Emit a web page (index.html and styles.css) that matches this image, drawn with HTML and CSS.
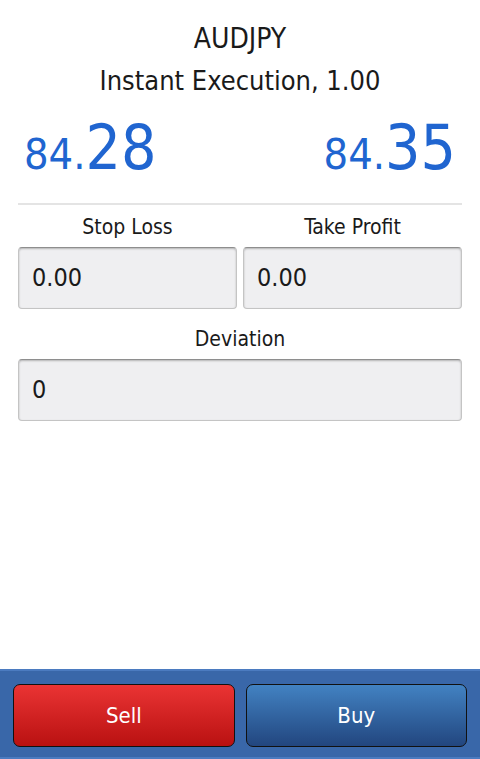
FILE: index.html
```html
<!DOCTYPE html>
<html lang="en">
<head>
    <meta charset="UTF-8">
    <title>AUDJPY - Order</title>
    <link rel="stylesheet" href="styles.css">
</head>
<body>
<div class="screen">
    <div class="ticket">
        <div class="symbol">AUDJPY</div>
        <div class="mode">Instant Execution, 1.00</div>
        <div class="prices">
            <div class="price"><span class="small">84.</span><span class="big">28</span></div>
            <div class="price"><span class="small">84.</span><span class="big">35</span></div>
        </div>
        <div class="divider"></div>
        <div class="fields">
            <div class="field">
                <div class="label">Stop Loss</div>
                <div class="box">0.00</div>
            </div>
            <div class="field">
                <div class="label">Take Profit</div>
                <div class="box">0.00</div>
            </div>
            <div class="field wide">
                <div class="label">Deviation</div>
                <div class="box">0</div>
            </div>
        </div>
    </div>
    <div class="footer">
        <button class="btn sell">Sell</button>
        <button class="btn buy">Buy</button>
    </div>
</div>
</body>
</html>
```

FILE: styles.css
```css
body {
    margin: 0;
    background: #fff;
    font-family: 'DejaVu Sans Condensed', 'DejaVu Sans', sans-serif;
    color: #1a1a1a;
}
.screen {
    height: 759px;
    display: flex;
    flex-direction: column;
}
.ticket {
    padding: 0 18px;
}
.symbol {
    text-align: center;
    font-size: 28px;
    line-height: 40px;
    padding-top: 19px;
}
.mode {
    text-align: center;
    font-size: 27px;
    line-height: 40px;
    margin-top: 2px;
}
.prices {
    display: flex;
    justify-content: space-between;
    padding: 0 6px;
    margin-top: 12px;
    color: #2065d0;
    line-height: 70px;
}
.price .small {
    font-size: 43px;
}
.price .big {
    font-size: 62px;
}
.divider {
    height: 2px;
    background: #e4e4e4;
    margin-top: 4px;
}
.fields {
    display: grid;
    grid-template-columns: 1fr 1fr;
    column-gap: 6px;
    row-gap: 14px;
    margin-top: 6px;
}
.field.wide {
    grid-column: 1 / 3;
}
.label {
    text-align: center;
    font-size: 21px;
    line-height: 32px;
    padding-bottom: 4px;
}
.box {
    height: 62px;
    box-sizing: border-box;
    background: #efeff1;
    border: 1px solid #c4c4c4;
    border-top-color: #8e8e8e;
    border-radius: 4px;
    box-shadow: inset 0 1px 2px rgba(0, 0, 0, 0.25);
    font-size: 25px;
    line-height: 60px;
    padding-left: 13px;
    color: #1a1a1a;
}
.footer {
    margin-top: auto;
    height: 90px;
    box-sizing: border-box;
    background: #3967a9;
    border-top: 2px solid #4b7bc0;
    border-bottom: 2px solid #4b7bc0;
    display: flex;
    gap: 11px;
    padding: 13px 13px 0;
}
.btn {
    flex: 1;
    height: 63px;
    border: 1px solid #111;
    border-radius: 7px;
    font-family: 'DejaVu Sans Condensed', 'DejaVu Sans', sans-serif;
    font-size: 22px;
    color: #fff;
}
.sell {
    background: linear-gradient(#ea3434, #b91111);
}
.buy {
    background: linear-gradient(#4282c2, #22467f);
}
```
